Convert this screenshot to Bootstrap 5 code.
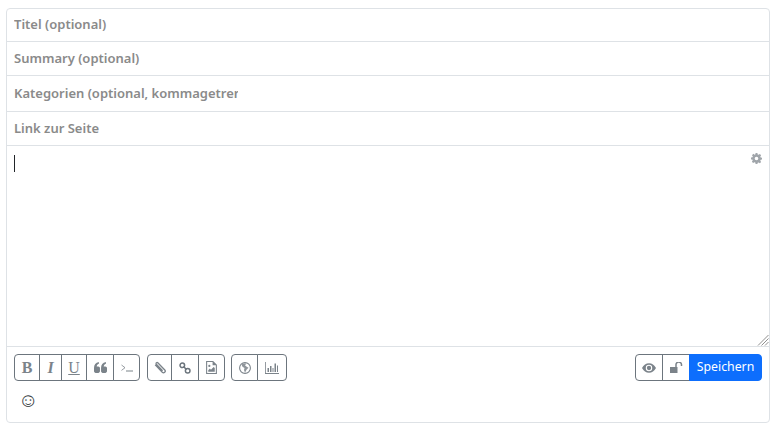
<!DOCTYPE html>
<html lang="de">
<head>
    <meta charset="UTF-8">
    <meta name="viewport" content="width=device-width, initial-scale=1">
    <title>Editor</title>
    <link href="https://cdn.jsdelivr.net/npm/bootstrap@5.3.0/dist/css/bootstrap.min.css" rel="stylesheet">
    <style>
        body { background: #fff; font-family: "Noto Sans", sans-serif; }
        .editor-box { margin: 8px 7px 0 6px; height: 415px; border: 1px solid #dee2e6; border-radius: 4px; overflow: hidden; }
        .field-input { display: block; width: 100%; border: 0; border-bottom: 1px solid #dee2e6; padding: 0 7px 2px; outline: 0; font-size: 13px; font-weight: 600; background: transparent; }
        .field-input::placeholder { color: #8a8a8a; opacity: 1; }
        .h-33 { height: 33px; }
        .h-34 { height: 34px; }
        .h-36 { height: 36px; }
        .cat-input { width: 238px; border-bottom: 0; }
        .cat-row { border-bottom: 1px solid #dee2e6; }
        .body-wrap { height: 201px; border-bottom: 1px solid #dee2e6; }
        .body-area { display: block; width: 100%; height: 200px; border: 0; outline: 0; resize: none; background: transparent; }
        .text-caret { position: absolute; left: 7px; top: 9px; width: 1px; height: 17px; background: #212529; }
        .gear-icon { position: absolute; right: 7px; top: 7px; width: 11px; height: 11px; fill: #a0a5aa; }
        .grip-icon { position: absolute; right: 0; bottom: 0; width: 12px; height: 12px; pointer-events: none; }
        .tool-row { padding: 7px 7px 0 7px; }
        .tool-group { height: 27px; --bs-border-radius: 4px; }
        .tool-btn { --bs-btn-border-radius: 4px; height: 27px; padding: 0; display: flex; align-items: center; justify-content: center; border-color: #6c757d; color: #6c757d; background: #fff; font-size: 14px; line-height: 1; }
        .tool-btn svg { fill: #7b838a; display: block; }
        .serif-glyph { font-family: "Liberation Serif", serif; font-size: 16px; color: #7b838a; }
        .gap-7 { margin-right: 7px; }
        .gap-6 { margin-right: 6px; }
        .w-23px { width: 23px; flex: none; }
        .w-25px { width: 25px; flex: none; }
        .w-26px { width: 26px; flex: none; }
        .w-27px { width: 27px; flex: none; }
        .w-28px { width: 28px; flex: none; }
        .w-30px { width: 30px; flex: none; }
        .save-btn { --bs-btn-border-radius: 4px; width: 73px; height: 27px; padding: 0; font-size: 12.3px; line-height: 1; flex: none; }
        .smile-row { padding: 7px 0 0 11px; font-family: "Liberation Sans", sans-serif; font-size: 20px; line-height: 24px; color: #343a40; }
    </style>
</head>
<body>

<div class="editor-box">
    <input class="field-input h-33" type="text" placeholder="Titel (optional)">
    <input class="field-input h-34" type="text" placeholder="Summary (optional)">
    <div class="cat-row h-36"><input class="field-input cat-input h-36" type="text" placeholder="Kategorien (optional, kommagetrennt)"></div>
    <input class="field-input h-34" type="text" placeholder="Link zur Seite">

    <!-- Text area -->
    <div class="body-wrap position-relative">
        <textarea class="body-area p-0"></textarea>
        <span class="text-caret"></span>
        <svg class="gear-icon" viewBox="0 0 24 24"><path d="M10 0h4l.6 3.2 2 .8L19.300 2.200l2.800 2.800-1.800 2.700.8 2 3.200.6v4l-3.200.6-.8 2 1.800 2.700-2.800 2.800-2.700-1.800-2 .8L14 24h-4l-.6-3.200-2-.8-2.700 1.800-2.800-2.800 1.800-2.700-.8-2L0 14v-4l3.200-.6.8-2L2.200 4.700 5 1.900l2.700 1.800 2-.8zM12 8a4 4 0 1 0 0 8 4 4 0 0 0 0-8z" fill-rule="evenodd"/></svg>
        <svg class="grip-icon" viewBox="0 0 12 12"><path d="M1 11.500 11.500 1M4.500 11.500l7-7M8 11.500l3.500-3.500" fill="none" stroke="#8f8f8f" stroke-width="1"/></svg>
    </div>

    <!-- Toolbar -->
    <div class="tool-row d-flex">
        <div class="btn-group tool-group gap-7">
            <button class="btn tool-btn w-26px serif-glyph fw-bold" type="button">B</button>
            <button class="btn tool-btn w-23px serif-glyph fst-italic fw-bold" type="button">I</button>
            <button class="btn tool-btn w-26px serif-glyph text-decoration-underline" type="button">U</button>
            <button class="btn tool-btn w-28px" type="button" aria-label="Zitat">
                <svg width="13" height="11" viewBox="0 0 24 20"><path d="M0 11C0 5 3 1 9 0v3C6 4 5 6 5 8h3c1.500 0 3 1.500 3 3v6c0 1.500-1.500 3-3 3H3c-1.500 0-3-1.500-3-3zM13 11c0-6 3-10 9-11v3c-3 1-4 3-4 5h3c1.500 0 3 1.500 3 3v6c0 1.500-1.500 3-3 3h-5c-1.500 0-3-1.500-3-3z"/></svg>
            </button>
            <button class="btn tool-btn w-27px" type="button" aria-label="Code">
                <svg width="12" height="9" viewBox="0 0 12 9"><path d="M.5 2l3.500 2.700-3.500 2.700" fill="none" stroke="#7b838a" stroke-width=".8"/><path d="M5 7.500h7V8.500H5z"/></svg>
            </button>
        </div>
        <div class="btn-group tool-group gap-6">
            <button class="btn tool-btn w-25px" type="button" aria-label="Anhang">
                <svg width="12" height="13" viewBox="0 0 12 13"><path d="M1.200 3.200 8.300 10.800a1.700 1.700 0 0 0 2.500-2.300L3.800 1.300a1 1 0 0 0-1.500 1.300l6.300 6.700" transform="translate(0 .5)" fill="none" stroke="#7b838a" stroke-width="1.300"/></svg>
            </button>
            <button class="btn tool-btn w-28px" type="button" aria-label="Link">
                <svg width="12" height="12" viewBox="0 0 12 12"><g fill="none" stroke="#6c757d" stroke-width="1.500"><circle cx="3.300" cy="3.300" r="2.300"/><circle cx="8.700" cy="8.700" r="2.300"/><path d="M4.500 4.500l3 3"/></g></svg>
            </button>
            <button class="btn tool-btn w-27px" type="button" aria-label="Bild">
                <svg width="11" height="13" viewBox="0 0 10 12"><path fill-rule="evenodd" d="M0 0h6.500L10 3.500V12H0zM1 1v10h8V4H6V1z"/><path d="M2 10V8.500L3.500 7l1 1L7 5.500 8 6.500V10z"/><circle cx="3" cy="4.500" r="1"/></svg>
            </button>
        </div>
        <div class="btn-group tool-group">
            <button class="btn tool-btn w-27px" type="button" aria-label="Web">
                <svg width="12" height="12" viewBox="0 0 12 12"><circle cx="6" cy="6" r="5.400" fill="none" stroke="#7b838a" stroke-width="1.100"/><path d="M2.500 2.500 3.500 4.800 5.500 6l-.5 2 1 2.800 1.500-3 2-2-2.500-1.500-1-1L7.500 1.500H4.500z" opacity=".85"/></svg>
            </button>
            <button class="btn tool-btn w-30px" type="button" aria-label="Umfrage">
                <svg width="14" height="12" viewBox="0 0 14 12"><path d="M0 0h.8v11H14v1H0z"/><path d="M2.500 6H4v4H2.500zM5 4h1.500v6H5zM7.500 6h1v4h-1zM9.500 1.500H11V10H9.500zM12 3.500h1V10h-1z"/></svg>
            </button>
        </div>
        <div class="btn-group tool-group ms-auto">
            <button class="btn tool-btn w-28px" type="button" aria-label="Vorschau">
                <svg width="14" height="10" viewBox="0 0 13 9"><path fill-rule="evenodd" d="M0 4.500C1.500 1.800 3.800 0 6.500 0S11.500 1.800 13 4.500C11.500 7.200 9.200 9 6.500 9S1.500 7.200 0 4.500zM6.500 1.500a3 3 0 1 0 0 6 3 3 0 0 0 0-6z"/><circle cx="6.500" cy="4.500" r="2"/></svg>
            </button>
            <button class="btn tool-btn w-28px" type="button" aria-label="Sichtbarkeit">
                <svg width="13" height="11" viewBox="0 0 13 11"><path d="M0 5h7.500v6H0z"/><path d="M6 5V3a2.500 2.500 0 0 1 5.500-.5V4" fill="none" stroke="#7b838a" stroke-width="1.500"/></svg>
            </button>
            <button class="btn btn-primary save-btn" type="button">Speichern</button>
        </div>
    </div>
    <div class="smile-row">☺</div>
</div>

<script src="https://cdn.jsdelivr.net/npm/bootstrap@5.3.0/dist/js/bootstrap.bundle.min.js"></script>
</body>
</html>
